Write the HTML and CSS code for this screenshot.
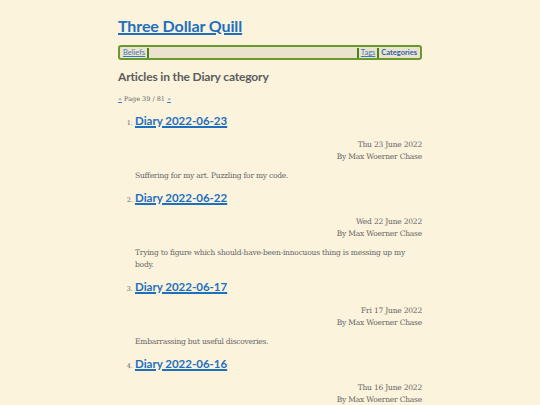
FILE: index.html
```html
<!DOCTYPE html>
<html lang="en">
<head>
<meta charset="utf-8">
<title>Articles in the Diary category - Three Dollar Quill</title>
<link rel="stylesheet" href="styles.css">
</head>
<body>
<div class="page">
  <header class="site-header">
    <h1 class="site-title"><a href="#">Three Dollar Quill</a></h1>
    <nav class="nav">
      <a href="#" class="nav-link">Beliefs</a><span class="sep"></span>
      <span class="spacer"></span>
      <span class="sep"></span><a href="#" class="nav-link">Tags</a><span class="sep"></span><a href="#" class="nav-link current">Categories</a>
    </nav>
  </header>
  <main>
    <h2 class="page-heading">Articles in the Diary category</h2>
    <p class="pager"><a href="#">«</a> Page 39 / 81 <a href="#">»</a></p>
    <ol class="articles" start="1">
      <li class="article">
        <h3 class="article-title"><a href="#">Diary 2022-06-23</a></h3>
        <div class="meta"><div>Thu 23 June 2022</div><div>By Max Woerner Chase</div></div>
        <p class="summary">Suffering for my art. Puzzling for my code.</p>
      </li>
      <li class="article">
        <h3 class="article-title"><a href="#">Diary 2022-06-22</a></h3>
        <div class="meta"><div>Wed 22 June 2022</div><div>By Max Woerner Chase</div></div>
        <p class="summary">Trying to figure which should-have-been-innocuous thing is messing up my body.</p>
      </li>
      <li class="article">
        <h3 class="article-title"><a href="#">Diary 2022-06-17</a></h3>
        <div class="meta"><div>Fri 17 June 2022</div><div>By Max Woerner Chase</div></div>
        <p class="summary">Embarrassing but useful discoveries.</p>
      </li>
      <li class="article">
        <h3 class="article-title"><a href="#">Diary 2022-06-16</a></h3>
        <div class="meta"><div>Thu 16 June 2022</div><div>By Max Woerner Chase</div></div>
        <p class="summary">Miscellaneous.</p>
      </li>
    </ol>
  </main>
</div>
</body>
</html>
```
FILE: styles.css
```css
html, body {
  margin: 0;
  padding: 0;
  background: #fbf3dc;
}
body {
  font-family: "DejaVu Serif", serif;
  color: #555;
}
.page {
  width: 304px;
  margin: 0 auto;
  padding-top: 15px;
}
.site-title {
  font-family: Lato, "Open Sans", sans-serif;
  font-size: 16px;
  font-weight: 700;
  letter-spacing: -0.1px;
  line-height: 22px;
  margin: 0;
}
.site-title a {
  color: #1f6fbf;
  text-decoration-thickness: 1.5px;
}
.nav {
  display: flex;
  align-items: center;
  margin-top: 8px;
  height: 11px;
  padding: 0 2px 0 2px;
  border: 2px solid #6a9a2e;
  border-radius: 3px;
  background: #ebe3cd;
  font-family: Lato, "Open Sans", sans-serif;
  font-size: 7.5px;
  line-height: 11px;
}
.nav-link {
  color: #3f79b8;
  padding: 0 1px;
}
.nav-link.current {
  font-weight: 700;
  color: #2d64a6;
  text-decoration: none;
}
.sep {
  display: inline-block;
  width: 2px;
  height: 10px;
  background: #4d7f1c;
  margin: 0 1px;
}
.spacer {
  flex: 1;
}
.page-heading {
  font-family: Lato, "Open Sans", sans-serif;
  font-size: 12px;
  font-weight: 700;
  letter-spacing: -0.15px;
  color: #5c5c5c;
  margin: 9px 0 0;
  line-height: 16px;
}
.pager {
  font-size: 6.5px;
  line-height: 10px;
  margin: 9px 0 0;
  color: #666;
}
.pager a {
  color: #3f79b8;
}
.articles {
  margin: 9px 0 0;
  padding-left: 17px;
}
.article {
  font-size: 6.5px;
  color: #666;
}
.article-title {
  display: inline-block;
  margin: 0;
  font-family: Lato, "Open Sans", sans-serif;
  font-size: 11.5px;
  line-height: 16px;
  font-weight: 700;
  vertical-align: baseline;
}
.article-title a {
  color: #1f6fbf;
  text-decoration-thickness: 1.5px;
}
.meta {
  text-align: right;
  font-size: 7.5px;
  letter-spacing: -0.2px;
  line-height: 12px;
  margin-top: 10px;
  color: #666;
}
.summary {
  font-size: 7.5px;
  letter-spacing: -0.22px;
  line-height: 12px;
  margin: 7px 0 8px;
  color: #666;
}
```
